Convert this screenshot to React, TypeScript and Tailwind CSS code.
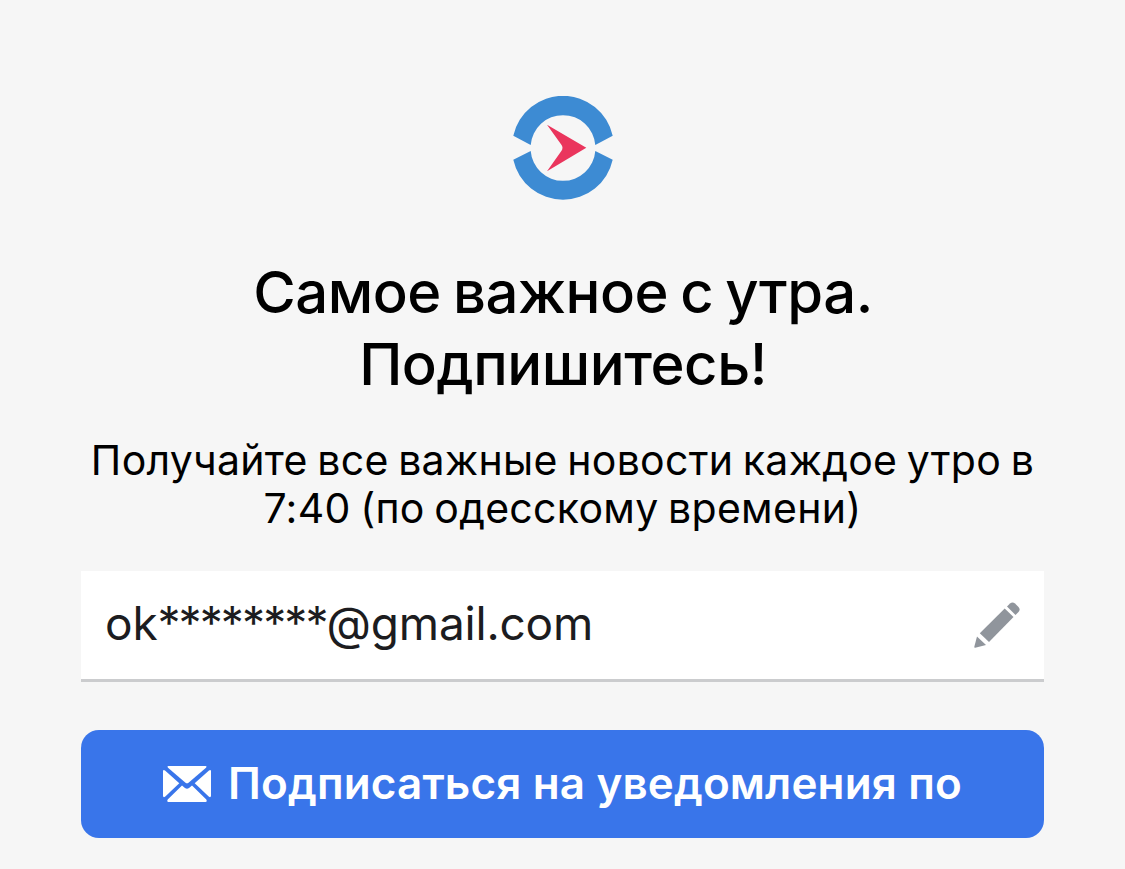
const Logo = () => (
  <svg className="w-[100px] h-[104px]" viewBox="0 0 100 104">
    <path
      fill="#3d8bd3"
      d="M0.300 39.700A50.900 50.900 0 0 1 99.700 39.700L82.300 49A32.400 32.400 0 0 0 17.700 49ZM0.300 63.800L17.700 55A32.400 32.400 0 0 0 82.300 55L99.700 63.800A50.900 50.900 0 0 1 0.300 63.800Z"
    />
    <path
      fill="#ea355d"
      d="M34 28.700L73.300 51.700L34 75.300L48 55.500Q51 51.700 48 48.200Z"
    />
  </svg>
);

const PencilIcon = () => (
  <svg className="w-[46px] h-[46px]" viewBox="0 0 46 46" fill="#90959c">
    <path d="M0.300 44.800L3 34.400L12 43L1.200 45.800Q0.100 46 0.300 44.800Z" />
    <path d="M5.800 31.300L30.700 6.500L39.500 15L15 40Z" />
    <path d="M33 4.500L36 1.500Q38.500 -0.700 41 1.500L44.500 5Q46.700 7.500 44.500 10L41.500 13Z" />
  </svg>
);

const MailIcon = () => (
  <svg className="w-12 h-9" viewBox="0 0 48 36" fill="white">
    <path d="M5.500 0H42.500Q44.300 0.200 43 1.700L25.500 16.700Q24 17.800 22.500 16.700L5 1.700Q3.700 0.200 5.500 0Z" />
    <path d="M0 5Q0.300 3.300 2 4.500L16.300 17.300L2 30.800Q0.300 31.800 0 30Z" />
    <path d="M48 5Q47.700 3.300 46 4.500L31.700 17.300L46 30.800Q47.700 31.800 48 30Z" />
    <path d="M19 19.500L22 22Q24 23.600 26 22L29 19.500L43.300 33.500Q44.500 35.500 42.500 36H5.500Q3.500 35.500 4.700 33.500Z" />
  </svg>
);

const App = () => {
  return (
    <main className="h-screen overflow-hidden bg-[#f6f6f6] font-['Inter',sans-serif] px-[81px] pt-24 text-black">
      <div className="flex justify-center">
        <Logo />
      </div>
      <h1 className="mt-14 pl-px text-center text-[58px] leading-[72px] font-medium tracking-[-0.45px] [word-spacing:-3px] whitespace-nowrap">
        Самое важное с утра.
        <br />
        Подпишитесь!
      </h1>
      <p className="mt-9 text-center text-[41px] leading-12 tracking-[0.3px] [word-spacing:-2.3px] whitespace-nowrap">
        Получайте все важные новости каждое утро в
        <br />
        7:40 (по одесскому времени)
      </p>
      <div className="mt-[39px] h-[111px] flex items-center justify-between border-b-3 border-[#cbccce] bg-white px-6 text-[46px] text-[#1c1c20]">
        <span className="pb-1 tracking-[-0.2px]">
          ok<span className="tracking-[-1.9px]">********</span>@gmail.com
        </span>
        <PencilIcon />
      </div>
      <button className="mt-12 flex h-[108px] w-full items-center justify-center gap-[17px] rounded-[18px] bg-[#3975ea] text-[44px] font-semibold tracking-[0.15px] text-white whitespace-nowrap">
        <MailIcon />
        <span className="pb-0.5">Подписаться на уведомления по</span>
      </button>
    </main>
  );
};

export default App;
